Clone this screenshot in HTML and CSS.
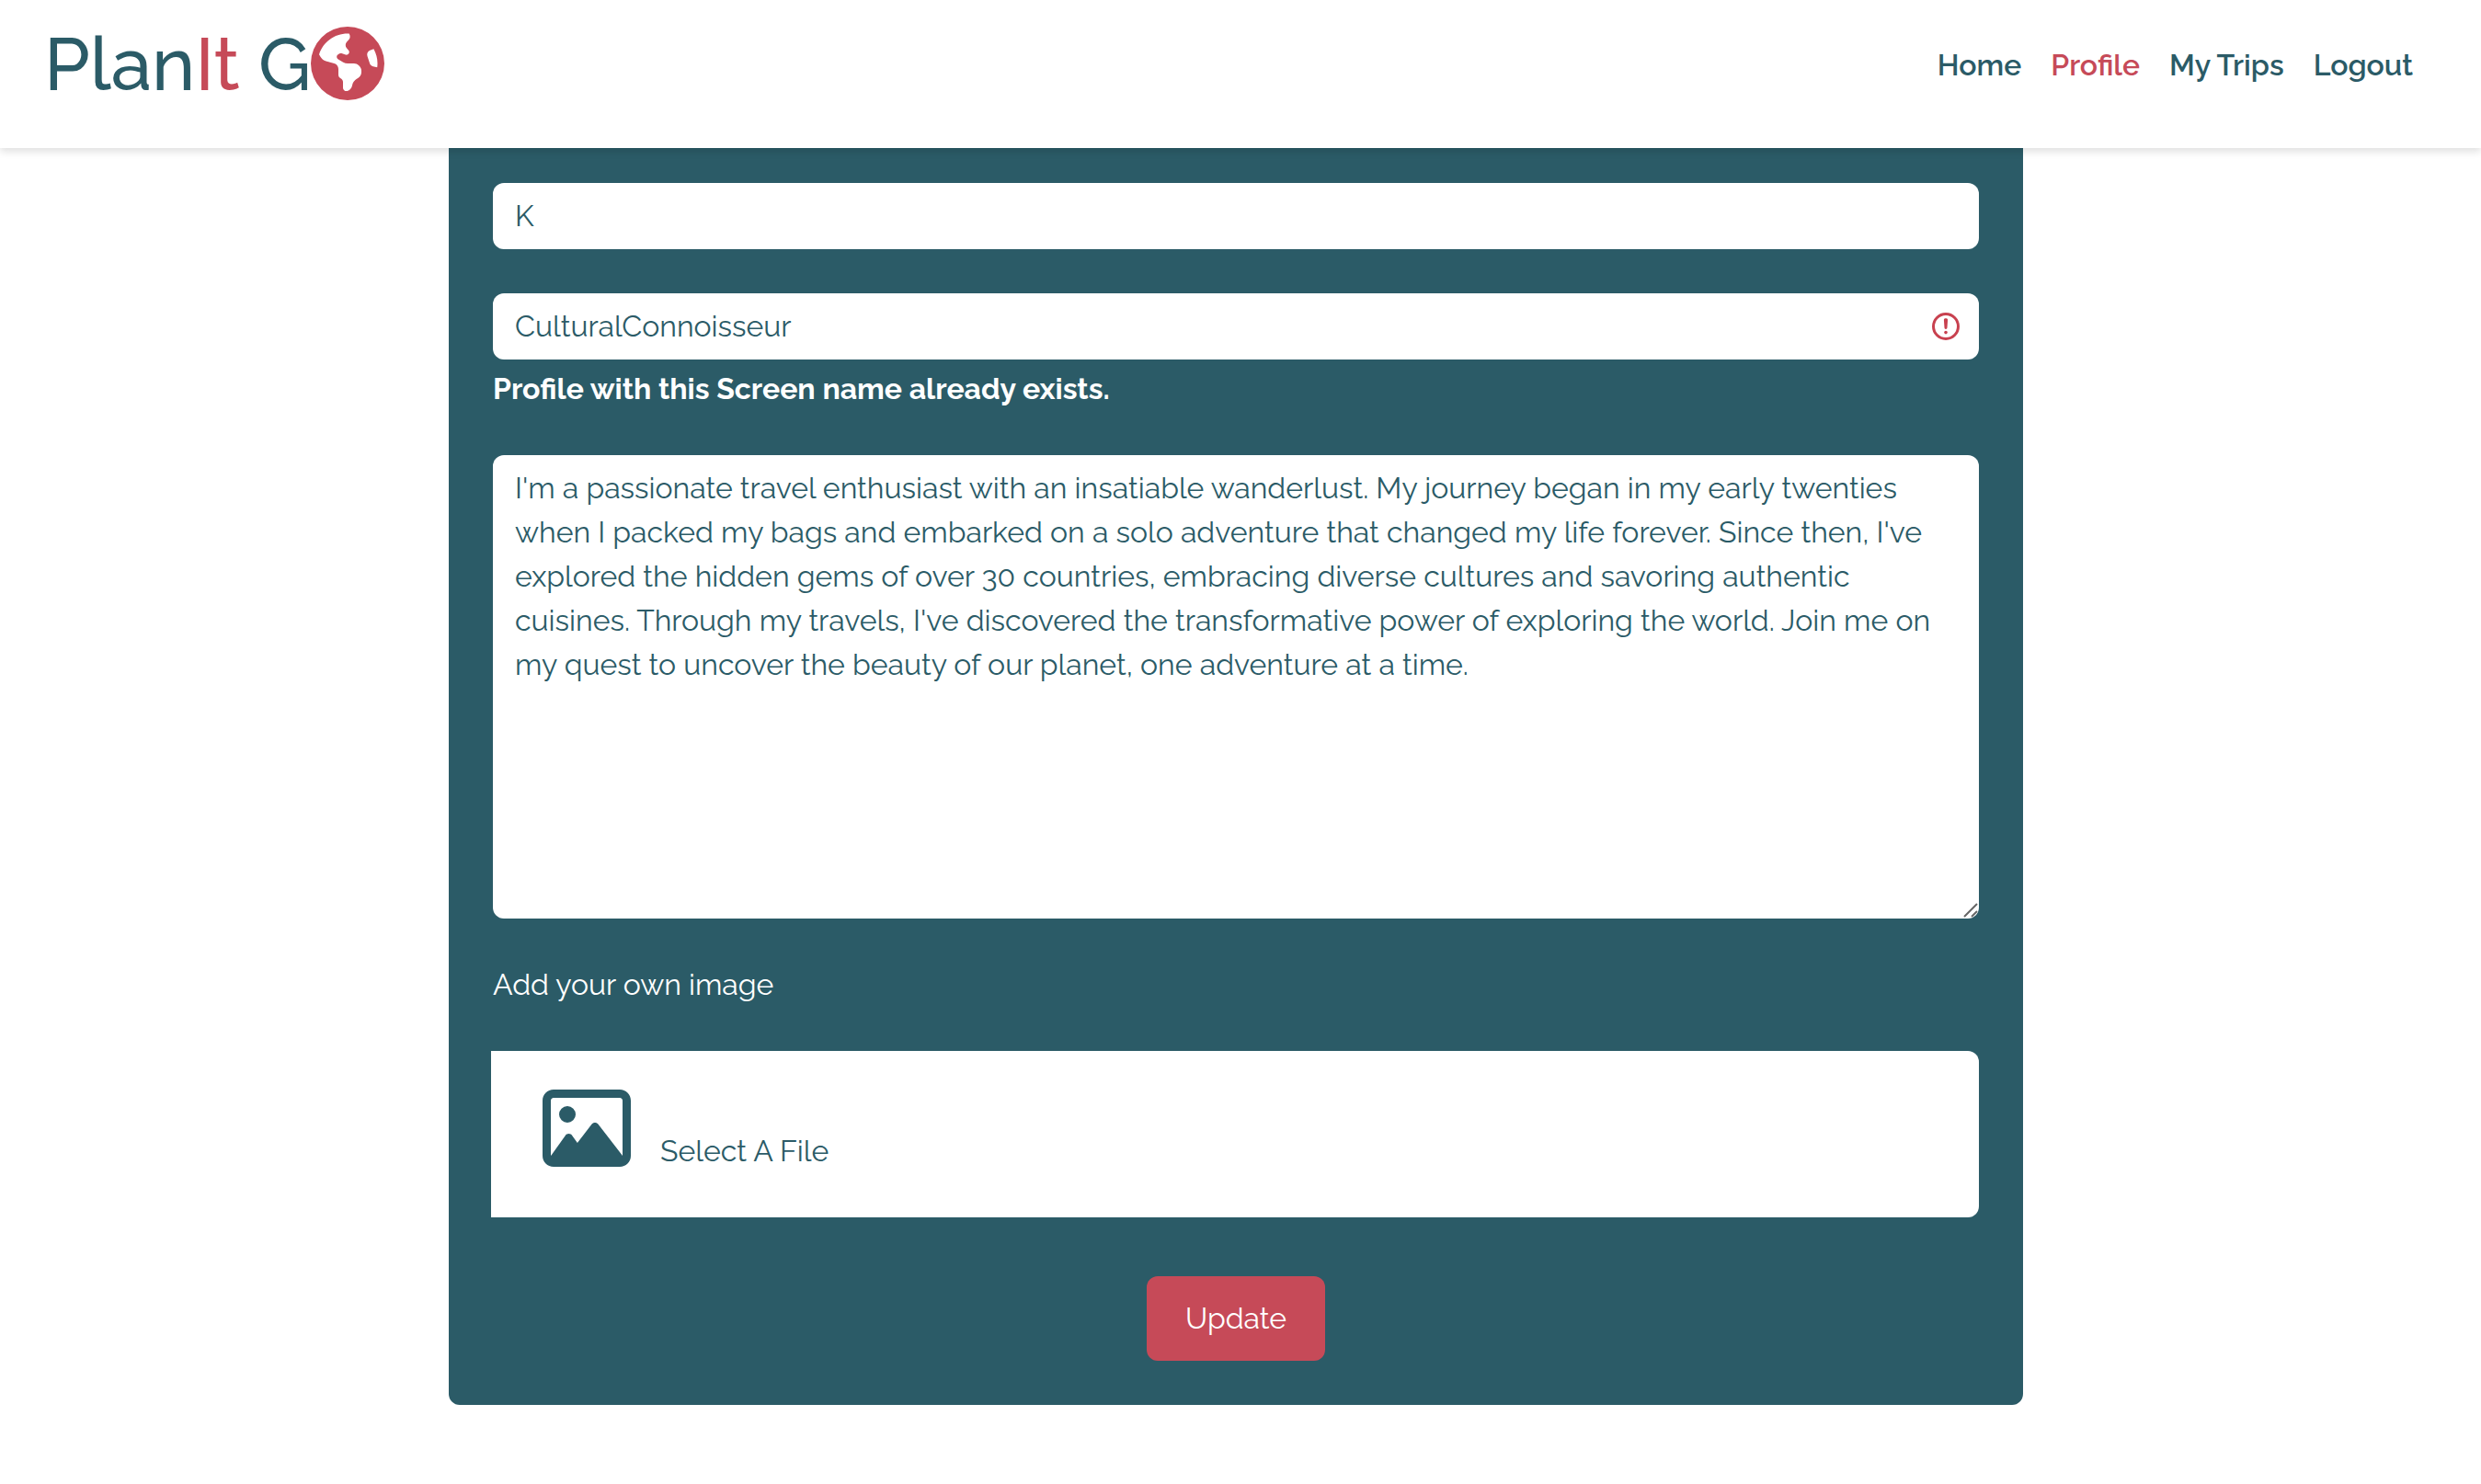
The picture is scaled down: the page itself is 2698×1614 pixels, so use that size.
FILE: index.html
```html
<!DOCTYPE html>
<html lang="en">
<head>
  <meta charset="utf-8">
  <meta name="viewport" content="width=device-width, initial-scale=1">
  <title>PlanIt Go - Profile</title>
  <link rel="stylesheet" href="styles.css">
</head>
<body>
  <header class="header">
    <a class="logo" href="#" aria-label="PlanIt Go"><span>Plan<span class="accent">It</span> G</span><svg class="globe" viewBox="0 0 512 512" aria-hidden="true"><path d="M57.7 193l9.4 16.4c8.3 14.5 21.9 25.2 38 29.8L163 255.7c17.2 4.9 29 20.6 29 38.5v39.9c0 11 6.2 21 16 25.9s16 14.9 16 25.9v39c0 15.6 14.9 26.9 29.9 22.6c16.1-4.6 28.6-17.5 32.7-33.8l2.8-11.2c4.2-16.9 15.2-31.4 30.3-40l8.1-4.6c15-8.5 24.2-24.5 24.2-41.7v-8.3c0-12.7-5.1-24.9-14.1-33.9l-3.9-3.9c-9-9-21.2-14.1-33.9-14.1H257c-11.1 0-22.1-2.9-31.8-8.4l-34.5-19.7c-4.3-2.5-7.6-6.5-9.2-11.2c-3.2-9.6 1.1-20 10.2-24.5l5.9-3c6.6-3.3 14.3-3.9 21.3-1.5l23.2 7.7c8.2 2.7 17.2-.4 21.9-7.5c4.7-7 4.2-16.3-1.2-22.8l-13.6-16.3c-10-12-9.9-29.5 .3-41.3l15.7-18.3c8.8-10.3 10.2-25 3.5-36.7l-2.4-4.2c-3.5-.2-6.9-.3-10.4-.3C163.1 48 84.4 108.9 57.7 193zM464 256c0-36.8-9.6-71.4-26.4-101.5L412 164.8c-15.7 6.3-23.8 23.8-18.5 39.8l16.9 50.7c3.5 10.4 12 18.3 22.6 20.9l29.1 7.3c1.2-9 1.8-18.2 1.8-27.5zM0 256a256 256 0 1 1 512 0A256 256 0 1 1 0 256z"/></svg></a>
    <nav class="nav">
      <a href="#">Home</a>
      <a class="accent" href="#" aria-current="page">Profile</a>
      <a href="#">My Trips</a>
      <a href="#">Logout</a>
    </nav>
  </header>
  <main class="main">
    <form class="card">
      <input class="field" type="text" aria-label="Name" value="K">
      <div class="group">
        <div class="control">
          <input class="field" type="text" aria-label="Screen name" aria-describedby="screen-name-error" aria-invalid="true" value="CulturalConnoisseur">
          <svg class="alert" viewBox="0 0 12 12" aria-hidden="true"><circle cx="6" cy="6" r="4.5"/><path stroke-linejoin="round" d="M5.8 3.6h.4L6 6.5z"/><circle class="dot" cx="6" cy="8.2" r=".6"/></svg>
        </div>
        <p class="error" id="screen-name-error">Profile with this Screen name already exists.</p>
      </div>
      <div class="control">
        <textarea class="field bio" rows="10" aria-label="Bio">I'm a passionate travel enthusiast with an insatiable wanderlust. My journey began in my early twenties when I packed my bags and embarked on a solo adventure that changed my life forever. Since then, I've explored the hidden gems of over 30 countries, embracing diverse cultures and savoring authentic cuisines. Through my travels, I've discovered the transformative power of exploring the world. Join me on my quest to uncover the beauty of our planet, one adventure at a time.</textarea>
        <svg class="grip" viewBox="0 0 18 18" aria-hidden="true"><path d="M2 16L16 2M10 16L16 10"/></svg>
      </div>
      <label class="caption" for="image">Add your own image</label>
      <label class="upload">
        <svg class="picture" viewBox="0 32 512 448" aria-hidden="true"><path d="M448 80c8.8 0 16 7.2 16 16V415.8l-5-6.5-136-176c-4.5-5.9-11.6-9.3-19-9.3s-14.4 3.4-19 9.3L202 340.7l-30.5-42.7C167 291.7 159.8 288 152 288s-15 3.7-19.5 10.1l-80 112L48 416.3l0-.3V96c0-8.8 7.2-16 16-16H448zM64 32C28.7 32 0 60.7 0 96V416c0 35.3 28.7 64 64 64H448c35.3 0 64-28.7 64-64V96c0-35.3-28.7-64-64-64H64zm80 192a48 48 0 1 0 0-96 48 48 0 1 0 0 96z"/></svg>
        <span>Select A File</span>
        <input class="file" id="image" type="file" accept="image/*">
      </label>
      <button class="submit" type="submit">Update</button>
    </form>
  </main>
</body>
</html>
```
FILE: styles.css
```css
:root {
  --teal: #2b5b67;
  --red: #c64a58;
}

* {
  box-sizing: border-box;
}

body {
  margin: 0;
  background: #fff;
  color: var(--teal);
  font-family: Raleway, Lato, sans-serif;
  font-size: 32px;
  line-height: 48px;
}

a {
  color: inherit;
  text-decoration: none;
}

.accent {
  color: var(--red);
}

.header {
  position: sticky;
  top: 0;
  z-index: 1;
  display: flex;
  align-items: flex-start;
  justify-content: space-between;
  padding: 28px 74px 51px 48px;
  background: #fff;
  box-shadow: 0 4px 8px rgba(0, 0, 0, 0.12);
}

.logo {
  display: flex;
  align-items: center;
  font-size: 80px;
  font-weight: 500;
  line-height: 80px;
}

.logo > span {
  padding-top: 2px;
}

.globe {
  width: 80px;
  height: 80px;
  fill: var(--red);
}

.nav {
  display: flex;
  gap: 32px;
  padding-top: 19px;
  font-weight: 600;
}

.main {
  padding: 0 10px 84px 0;
}

.card {
  display: flex;
  flex-direction: column;
  gap: 48px;
  width: 100%;
  max-width: 1712px;
  margin: 0 auto;
  padding: 38px 48px 48px;
  border-radius: 0 0 12px 12px;
  background: var(--teal);
}

.field {
  display: block;
  width: 100%;
  padding: 12px 24px;
  border: 0;
  border-radius: 12px;
  background: #fff;
  color: var(--teal);
  font: inherit;
}

.control {
  position: relative;
}

.alert {
  position: absolute;
  top: 18px;
  right: 18px;
  width: 36px;
  height: 36px;
  fill: none;
  stroke: #c8414f;
}

.dot {
  fill: #c8414f;
  stroke: none;
}

.error {
  margin: 8px 0 0;
  color: #fff;
  font-weight: 700;
}

.bio {
  resize: none;
}

.grip {
  position: absolute;
  right: 0;
  bottom: 0;
  width: 18px;
  height: 18px;
  fill: none;
  stroke: #666;
  stroke-width: 2;
  pointer-events: none;
}

.caption {
  color: #fff;
}

.upload {
  display: flex;
  align-items: flex-end;
  gap: 32px;
  margin-left: -2px;
  padding: 42px 56px 48px;
  border-radius: 0 12px 12px 0;
  background: #fff;
}

.picture {
  width: 96px;
  height: 84px;
  margin-bottom: 7px;
  fill: var(--teal);
}

.file {
  position: absolute;
  width: 1px;
  height: 1px;
  opacity: 0;
}

.submit {
  align-self: center;
  margin-top: 16px;
  padding: 22px 42px;
  border: 0;
  border-radius: 12px;
  background: var(--red);
  color: #fff;
  font: inherit;
}
```
